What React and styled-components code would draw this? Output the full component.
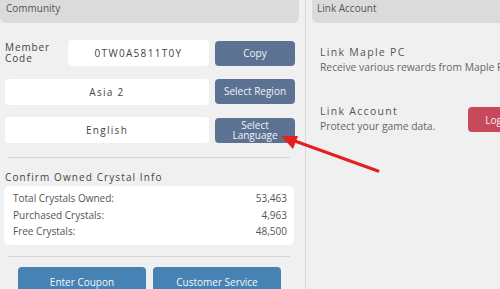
import React from 'react';
import styled, { createGlobalStyle } from 'styled-components';

const GlobalStyle = createGlobalStyle`
  html, body {
    margin: 0;
    padding: 0;
    background: #f0f0f0;
    font-family: 'Open Sans', 'Noto Sans', sans-serif;
  }
`;

// Page frame
const Page = styled.div`
  position: relative;
  display: flex;
  width: 500px;
  height: 289px;
  overflow: hidden;
  background: #f0f0f0;
`;

const LeftPanel = styled.div`
  width: 299px;
  flex-shrink: 0;
  display: flex;
  flex-direction: column;
`;

const RightPanel = styled.div`
  width: 228px;
  flex-shrink: 0;
  display: flex;
  flex-direction: column;
`;

const VDivider = styled.div`
  width: 1px;
  flex-shrink: 0;
  margin: 0 6px;
  background: #dadada;
`;

const PanelHeader = styled.div`
  height: 23px;
  flex-shrink: 0;
  box-sizing: border-box;
  display: flex;
  align-items: center;
  padding: 0 0 7px ${p => p.inset || 6}px;
  background: #dbdbdb;
  border-radius: 0 0 6px 6px;
  font-size: 10px;
  color: #555;
`;

// Left side
const Content = styled.div`
  display: flex;
  flex-direction: column;
  flex-shrink: 0;
  padding: 17px 4px 0 5px;
`;

const FieldStack = styled.div`
  display: flex;
  flex-direction: column;
  gap: 12.5px;
`;

const FieldRow = styled.div`
  display: flex;
  align-items: center;
  gap: 6px;
  height: 26px;
`;

const FieldLabel = styled.div`
  width: 57px;
  flex-shrink: 0;
  font-size: 10px;
  line-height: 11px;
  letter-spacing: 0.9px;
  color: #444;
`;

const Field = styled.div`
  flex: 1;
  height: 26px;
  display: flex;
  align-items: center;
  justify-content: center;
  background: #fff;
  border-radius: 4px;
  font-size: 10px;
  letter-spacing: 1.3px;
  color: #444;
`;

const SlateButton = styled.button`
  width: 80px;
  height: 25px;
  flex-shrink: 0;
  border: none;
  border-radius: 4px;
  background: #5b7292;
  color: #f2f4f8;
  font-family: inherit;
  font-size: 10px;
  line-height: 10.5px;
  padding: 0;
`;

const Rule = styled.div`
  height: 1px;
  flex-shrink: 0;
  background: #d6d6d6;
  margin: ${p => p.top}px 5px 0 3px;
`;

const SectionTitle = styled.div`
  margin-top: 12px;
  font-size: 10px;
  line-height: 14px;
  letter-spacing: 1.1px;
  color: #444;
`;

const CrystalCard = styled.div`
  margin: 2px 1px 0 -1px;
  padding: 4px 7px 5px 9px;
  background: #fff;
  border-radius: 5px;
`;

const CrystalRow = styled.div`
  display: flex;
  justify-content: space-between;
  align-items: center;
  height: 16.5px;
  font-size: 10px;
  color: #555;
`;

const ActionRow = styled.div`
  display: flex;
  gap: 7px;
  margin-top: 10px;
  padding-left: 13px;
`;

const ActionButton = styled.button`
  width: 128px;
  height: 30px;
  flex-shrink: 0;
  border: none;
  border-radius: 4px;
  background: #4682b4;
  color: #f4f8fc;
  font-family: inherit;
  font-size: 10px;
  padding: 0;
`;

// Right side
const LinkList = styled.div`
  display: flex;
  flex-direction: column;
  gap: 30px;
  padding: 22px 12px 0 8px;
`;

const LinkItem = styled.div`
  display: flex;
  align-items: center;
  justify-content: space-between;
`;

const LinkText = styled.div`
  display: flex;
  flex-direction: column;
  gap: 1px;
  white-space: nowrap;
`;

const LinkTitle = styled.div`
  font-size: 10.5px;
  line-height: 14px;
  letter-spacing: 1.3px;
  color: #555;
`;

const LinkDesc = styled.div`
  font-size: 10.3px;
  line-height: 14px;
  color: #666;
`;

const RedButton = styled.button`
  width: 60px;
  height: 25px;
  flex-shrink: 0;
  margin-top: 2px;
  border: none;
  border-radius: 4px;
  background: #c74a5c;
  color: #fbeef0;
  font-family: inherit;
  font-size: 10px;
  padding: 0;
`;

const ArrowOverlay = styled.svg`
  position: absolute;
  left: 0;
  top: 0;
  pointer-events: none;
`;

const crystals = [
  { label: 'Total Crystals Owned:', value: '53,463' },
  { label: 'Purchased Crystals:', value: '4,963' },
  { label: 'Free Crystals:', value: '48,500' },
];

export default function App() {
  return (
    <>
      <GlobalStyle />
      <Page>
        <LeftPanel>
          <PanelHeader>Community</PanelHeader>
          <Content>
            <FieldStack>
              <FieldRow>
                <FieldLabel>Member<br />Code</FieldLabel>
                <Field>0TW0A5811T0Y</Field>
                <SlateButton>Copy</SlateButton>
              </FieldRow>
              <FieldRow>
                <Field>Asia 2</Field>
                <SlateButton>Select Region</SlateButton>
              </FieldRow>
              <FieldRow>
                <Field>English</Field>
                <SlateButton>Select<br />Language</SlateButton>
              </FieldRow>
            </FieldStack>

            <Rule top={14} />
            <SectionTitle>Confirm Owned Crystal Info</SectionTitle>
            <CrystalCard>
              {crystals.map(c => (
                <CrystalRow key={c.label}>
                  <span>{c.label}</span>
                  <span>{c.value}</span>
                </CrystalRow>
              ))}
            </CrystalCard>
            <Rule top={11} />

            <ActionRow>
              <ActionButton>Enter Coupon</ActionButton>
              <ActionButton>Customer Service</ActionButton>
            </ActionRow>
          </Content>
        </LeftPanel>

        <VDivider />

        <RightPanel>
          <PanelHeader inset={5}>Link Account</PanelHeader>
          <LinkList>
            <LinkItem>
              <LinkText>
                <LinkTitle>Link Maple PC</LinkTitle>
                <LinkDesc>Receive various rewards from Maple PC.</LinkDesc>
              </LinkText>
            </LinkItem>
            <LinkItem>
              <LinkText>
                <LinkTitle>Link Account</LinkTitle>
                <LinkDesc>Protect your game data.</LinkDesc>
              </LinkText>
              <RedButton>Login</RedButton>
            </LinkItem>
          </LinkList>
        </RightPanel>

        <ArrowOverlay width="500" height="289">
          <line x1="378" y1="171" x2="292" y2="140" stroke="#e3201f" strokeWidth="3" strokeLinecap="round" />
          <polygon points="281,136 298,136 293,149" fill="#e3201f" />
        </ArrowOverlay>
      </Page>
    </>
  );
}
